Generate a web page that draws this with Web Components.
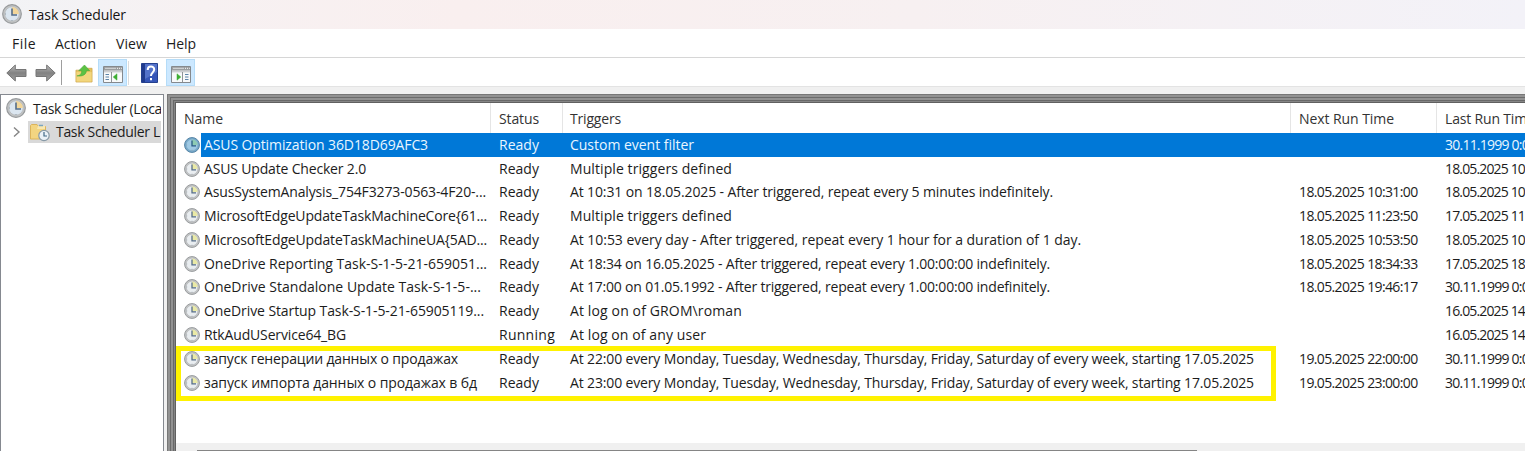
<!DOCTYPE html>
<html lang="en">
<head>
<meta charset="utf-8">
<title>Task Scheduler</title>
<style>
html,body{margin:0;height:100%;overflow:hidden}
body{font:14px/20px "Open Sans","Noto Sans",sans-serif;color:#1c1c1c;background:#f0f0f0}
</style>
</head>
<body>
<scheduler-window></scheduler-window>
<script>
// A single line of text, tracked so that it fills the width given in "w".
class FitText extends HTMLElement{
  connectedCallback(){
    if(this.shadowRoot)return;
    this.attachShadow({mode:'open'}).innerHTML='<style>:host{display:inline-block;white-space:pre;flex:none}</style><span><slot></slot></span>';
    const w=+this.getAttribute('w');
    if(!w)return;
    const s=this.shadowRoot.querySelector('span');
    const n=this.textContent.length;
    s.style.letterSpacing=((w-s.getBoundingClientRect().width)/n).toFixed(3)+'px';
  }
}
customElements.define('fit-text',FitText);

class ClockIcon extends HTMLElement{
  connectedCallback(){
    const sel=this.hasAttribute('selected'), big=this.hasAttribute('big');
    const rim=sel?'#5583a3':'#979a9c', face=sel?'#9fc9e4':(big?'#dbe6f0':'#e9edf0'), wedge=sel?'#8ecbb4':(big?'#f2d69a':'#e9e9a6');
    this.attachShadow({mode:'open'}).innerHTML=`<style>:host{display:block;flex:none;width:16px;height:16px;white-space:normal}svg{display:block;width:100%;height:100%}</style><svg viewBox="0 0 20 20"><circle cx="10" cy="10" r="9.3" fill="${sel?'#76a9cb':'#c2c4c5'}" stroke="${rim}" stroke-width="1.2"/><circle cx="10" cy="10" r="7.2" fill="${face}" stroke="${sel?'#7faac5':'#b3b6b8'}" stroke-width=".7"/><path d="M10 10V3a7 7 0 0 1 7 7z" fill="${wedge}"/><path d="M10 4.4V11h5" fill="none" stroke="${sel?'#285c83':'#566d86'}" stroke-width="1.6"/><path d="M10 16v1M3 10h1" stroke="#8f9ba4" stroke-width="1"/></svg>`;
  }
}
customElements.define('clock-icon',ClockIcon);

const win=(flip)=>`<svg width="20" height="17" viewBox="0 0 20 17"><path d="M.5.5h19v16H.5z" fill="#f8f9fa" stroke="#85898d"/><path d="M1 1h18v3.6H1z" fill="#9a9da0"/><path d="M2 2.3h11" stroke="#d9dcde"/><path d="M14 2.3h1M16 2.3h1M18 2.3h.8" stroke="#fff"/><path d="M1 5.8h18" stroke="#b9bdc0"/><g ${flip?'transform="translate(20 0) scale(-1 1)"':''}><path d="M8.5 6v10" stroke="#8e9397"/><path d="M2.500 8.500H6M2.500 11H6M2.500 13.500H6" stroke="#5b83a8" stroke-width="1.2"/><path d="M14 7.800v6.400L10.200 11z" fill="#3dae32" stroke="#3dae32" stroke-width=".5"/></g></svg>`;
const arrow=(flip)=>`<svg width="21" height="18" viewBox="0 0 21 18"><defs><linearGradient id="g" x2="0" y2="1"><stop stop-color="#bcbcbc"/><stop offset=".5" stop-color="#828282"/><stop offset="1" stop-color="#a0a0a0"/></linearGradient></defs><path ${flip?'transform="translate(21 0) scale(-1 1)"':''} d="M.8 9 9.3 1v4.5H20v7H9.3V17z" fill="url(#g)" stroke="#767676" stroke-linejoin="round"/></svg>`;
const glyphs={
 back:arrow(false),forward:arrow(true),
 up:`<svg width="18" height="19" viewBox="0 0 19 20"><path d="M1 6.5h9l2-2h6V19H1z" fill="#e6c35f" stroke="#cda650" stroke-width=".8"/><path d="M1.500 8.500h16v10h-16z" fill="#f2d67d"/><path d="M2 12.500c4-.5 5-2.500 5-5.500H4L10 1l5.500 6H12c0 4-4 6.500-10 5.500z" fill="#5cc244" stroke="#47a637" stroke-width=".6"/></svg>`,
 tree:win(false),actions:win(true),
 help:`<svg width="17" height="20" viewBox="0 0 17 20"><path d="M.5.5h16v19H.5z" fill="#3656b8" stroke="#25408f"/><path d="M1 1h3v18H1z" fill="#203b8e"/><path d="M4 1h12v8L4 16z" fill="#6886d6" opacity=".6"/><path d="M6.700 6.900C6.700 2.500 13.300 2.600 13.200 6.600 13.200 9.500 10 9.300 10 13M10 15v2.200" fill="none" stroke="#fff" stroke-width="2"/></svg>`};
class ToolButton extends HTMLElement{
  connectedCallback(){
    this.attachShadow({mode:'open'}).innerHTML=`<style>:host{display:grid;place-items:center;box-sizing:border-box;flex:none;width:29px;height:27px}:host([pressed]){background:#cce8ff;border:1px solid #b5dcf8;padding-top:3px}:host([icon=up]){padding-top:2px}svg{display:block}</style>${glyphs[this.getAttribute('icon')]}`;
  }
}
customElements.define('tool-button',ToolButton);

class TitleBar extends HTMLElement{
  connectedCallback(){
    this.attachShadow({mode:'open'}).innerHTML=`<style>:host{display:flex;align-items:center;gap:7px;height:29px;padding-left:2px;background:linear-gradient(90deg,#f2f3f6,#f7f1f2 13%,#f9efef 30%,#f7f0f1 60%,#f3f2f8);color:#151515}clock-icon{width:20px;height:20px;margin-top:-1px}</style><clock-icon big></clock-icon><fit-text w="97">Task Scheduler</fit-text>`;
  }
}
customElements.define('title-bar',TitleBar);

class MenuBar extends HTMLElement{
  connectedCallback(){
    this.attachShadow({mode:'open'}).innerHTML=`<style>:host{display:grid;grid-template-columns:43px 61px 50px 60px;align-items:center;height:29px;padding:2px 0 0 12px;box-sizing:border-box;background:#fff;border-bottom:1px solid #d6d6d6}</style><fit-text w="24">File</fit-text><fit-text w="41">Action</fit-text><fit-text w="31">View</fit-text><fit-text w="30">Help</fit-text>`;
  }
}
customElements.define('menu-bar',MenuBar);

class ToolBar extends HTMLElement{
  connectedCallback(){
    this.attachShadow({mode:'open'}).innerHTML=`<style>:host{display:flex;align-items:center;height:29px;box-sizing:border-box;padding:1px 0 0 2px;background:#fff;border-bottom:1px solid #e3e3e3}i{width:1px;height:25px;background:#9e9e9e;margin:0 7px 0 1px}i.l{background:#dcdcdc;height:24px;margin:0 6px 0 1px}</style>
    <tool-button icon="back"></tool-button><tool-button icon="forward"></tool-button><i></i><tool-button icon="up"></tool-button><tool-button icon="tree" pressed></tool-button><i class="l"></i><tool-button icon="help"></tool-button><tool-button icon="actions" pressed style="margin-left:2px"></tool-button>`;
  }
}
customElements.define('tool-bar',ToolBar);

class TreePane extends HTMLElement{
  connectedCallback(){
    this.attachShadow({mode:'open'}).innerHTML=`<style>:host{display:block;box-sizing:border-box;width:164px;flex:none;background:#fff;border:solid #858990;border-width:1px 1px 0;padding-right:2px;overflow:hidden}
    div{display:flex;align-items:center;height:23px;overflow:hidden}.r{padding-left:5px;gap:7px;height:25px}.r clock-icon{width:20px;height:20px}.r fit-text{padding-top:2px}.c{padding-left:11px}.s{flex:1;background:#d9d9d9;gap:6px;padding-left:1px;height:22px}svg{flex:none}</style>
    <div class="r"><clock-icon big></clock-icon><fit-text w="129">Task Scheduler (Loca</fit-text></div>
    <div class="c"><svg width="16" height="12" viewBox="0 0 16 12"><path d="M2 1.500 7 6 2 10.500" fill="none" stroke="#858585" stroke-width="1.400"/></svg><div class="s"><svg width="21" height="20" viewBox="0 0 21 20"><path d="M1.500 3.500V17h15V4.500H9.500L8 2.500H2.500z" fill="#f3d581" stroke="#dcb45b"/><path d="M9 4h7v3H8z" fill="#fae7af"/><path d="M10 3.500h4" stroke="#7ba5be" stroke-width="1.500"/><circle cx="15" cy="13.500" r="5.200" fill="#eaf2f8" stroke="#8799a6" stroke-width="1.200"/><path d="M15 10v4h3" fill="none" stroke="#416a87" stroke-width="1.200"/></svg><fit-text w="104">Task Scheduler L</fit-text></div></div>`;
  }
}
customElements.define('tree-pane',TreePane);

const tasks=[
['ASUS Optimization 36D18D69AFC3',224,'Ready','Custom event filter',124,'','30.11.1999 0:0'],
['ASUS Update Checker 2.0',162,'Ready','Multiple triggers defined',162,'','18.05.2025 10'],
['AsusSystemAnalysis_754F3273-0563-4F20-...',282,'Ready','At 10:31 on 18.05.2025 - After triggered, repeat every 5 minutes indefinitely.',483,'18.05.2025 10:31:00','18.05.2025 10'],
['MicrosoftEdgeUpdateTaskMachineCore{61...',283,'Ready','Multiple triggers defined',162,'18.05.2025 11:23:50','17.05.2025 11'],
['MicrosoftEdgeUpdateTaskMachineUA{5AD...',283,'Ready','At 10:53 every day - After triggered, repeat every 1 hour for a duration of 1 day.',511,'18.05.2025 10:53:50','18.05.2025 10'],
['OneDrive Reporting Task-S-1-5-21-659051...',283,'Ready','At 18:34 on 16.05.2025 - After triggered, repeat every 1.00:00:00 indefinitely.',480,'18.05.2025 18:34:33','17.05.2025 18'],
['OneDrive Standalone Update Task-S-1-5-...',277,'Ready','At 17:00 on 01.05.1992 - After triggered, repeat every 1.00:00:00 indefinitely.',480,'18.05.2025 19:46:17','30.11.1999 0:0'],
['OneDrive Startup Task-S-1-5-21-65905119...',280,'Ready','At log on of GROM\\roman',172,'','16.05.2025 14'],
['RtkAudUService64_BG',142,'Running','At log on of any user',136,'','16.05.2025 14'],
['запуск генерации данных о продажах',254,'Ready','At 22:00 every Monday, Tuesday, Wednesday, Thursday, Friday, Saturday of every week, starting 17.05.2025',684,'19.05.2025 22:00:00','30.11.1999 0:0'],
['запуск импорта данных о продажах в бд',273,'Ready','At 23:00 every Monday, Tuesday, Wednesday, Thursday, Friday, Saturday of every week, starting 17.05.2025',684,'19.05.2025 23:00:00','30.11.1999 0:0']];

class TaskRow extends HTMLElement{
  connectedCallback(){
    const [n,nw,s,t,tw,next,last]=tasks[this.getAttribute('index')], sel=this.hasAttribute('selected');
    this.attachShadow({mode:'open'}).innerHTML=`<style>:host{display:grid;grid-template-columns:307px 71px 729px 146px 90px;height:23.77px;align-items:center}
    :host([selected]){color:#e9f6ff;background:linear-gradient(#0078d7,#0078d7) 17px 0 no-repeat}
    div{display:flex;align-items:center;white-space:pre}.n{gap:4px}div:not(.n){padding-left:8px}</style>
    <div class="n"><clock-icon ${sel?'selected':''}></clock-icon><fit-text w="${nw}">${n}</fit-text></div><div><fit-text w="${s=='Ready'?40:56}">${s}</fit-text></div><div><fit-text w="${tw}">${t}</fit-text></div><div>${next?`<fit-text w="118.500">${next}</fit-text>`:''}</div><div><fit-text w="${last.length==14?84:80}">${last}</fit-text></div>`;
  }
}
customElements.define('task-row',TaskRow);

class TaskList extends HTMLElement{
  connectedCallback(){
    this.attachShadow({mode:'open'}).innerHTML=`<style>:host{display:flex;flex-direction:column;flex:1;min-width:0;position:relative;overflow:hidden;box-sizing:border-box;background:#fff;padding:9px 0 0 9px}
    .frame{position:absolute;inset:0;right:-12px;bottom:-12px;box-shadow:inset 1px 1px #777,inset 3px 3px #929292,inset 4px 4px #6b6b6b,inset 6px 6px #929292,inset 7px 7px #686868,inset 8px 8px #858585,inset 9px 9px #606060;pointer-events:none}
    .head{display:grid;grid-template-columns:315px 72px 728px 146px 90px;height:30px;flex:none;align-items:center;box-sizing:border-box}
    .head div{height:30px;box-sizing:border-box;border-right:1px solid #e5e5e5;padding:6px 0 0 8px;color:#333}.head div:nth-child(3){padding-left:7px}
    .rows{flex:none;padding-left:8px}
    .scroll{margin-top:auto;height:8px;background:#f0f0f0;padding:7px 0 0 21px;box-sizing:border-box}.thumb{width:1000px;height:1px;background:#858585}
    .mark{position:absolute;left:9px;top:252px;width:1100px;height:55px;box-sizing:border-box;border:5px solid #fff200}</style>
    <div class="frame"></div><div class="head"><div><fit-text w="39">Name</fit-text></div><div><fit-text w="40">Status</fit-text></div><div><fit-text w="51">Triggers</fit-text></div><div><fit-text w="95">Next Run Time</fit-text></div><div><fit-text w="82">Last Run Tim</fit-text></div></div>
    <div class="rows">${tasks.map((_,i)=>`<task-row index="${i}" ${i?'':'selected'}></task-row>`).join('')}</div><div class="scroll"><div class="thumb"></div></div><div class="mark"></div>`;
  }
}
customElements.define('task-list',TaskList);

class SchedulerWindow extends HTMLElement{
  connectedCallback(){
    this.attachShadow({mode:'open'}).innerHTML=`<style>:host{display:flex;flex-direction:column;height:100vh;overflow:hidden}main{display:flex;flex:1;min-height:0;gap:3px;padding-top:7px}</style><title-bar></title-bar><menu-bar></menu-bar><tool-bar></tool-bar><main><tree-pane></tree-pane><task-list></task-list></main>`;
  }
}
customElements.define('scheduler-window',SchedulerWindow);
</script>
</body>
</html>
